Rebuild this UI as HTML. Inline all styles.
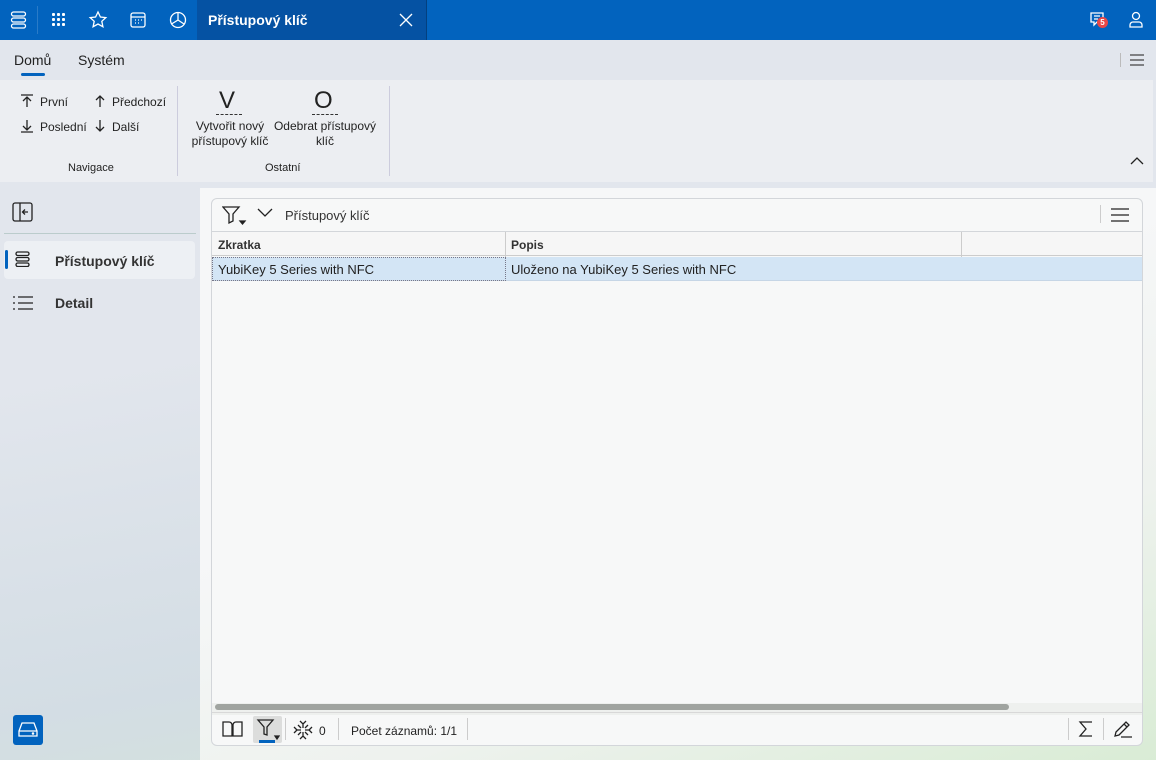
<!DOCTYPE html><html><head><meta charset="utf-8"><style>
*{box-sizing:border-box;margin:0;padding:0}
body{width:1156px;height:760px;overflow:hidden;font-family:"Liberation Sans",sans-serif;font-size:12px;color:#222;background:linear-gradient(170deg,#e2e6ed 40%,#d3dde4 75%,#d4e6d4);position:relative}
.a{position:absolute}
svg{position:absolute;fill:none;stroke-width:1.3}
</style></head><body>
<div class="a" style="left:0;top:0;width:1156px;height:40px;background:#0263be"></div>
<div class="a" style="left:37px;top:6px;width:1px;height:28px;background:#2a7bc8"></div>
<div class="a" style="left:197px;top:0;width:230px;height:40px;background:#0552a3;border-right:1px solid #03407f"></div>
<div class="a" style="left:208px;top:12px;color:#fff;font-weight:bold;font-size:14px">Přístupový klíč</div>
<svg style="left:398px;top:12px" width="16" height="16" stroke="#fff"><path d="M2 2L14 14M14 2L2 14"/></svg>
<svg style="left:10px;top:11px" width="18" height="18" stroke="#fff" stroke-width="1.5"><rect x="1.5" y="1" width="14" height="4" rx="2"/><rect x="1.5" y="7" width="14" height="4" rx="2"/><rect x="1.5" y="13" width="14" height="4" rx="2"/></svg>
<svg style="left:51px;top:12px;fill:#fff" width="16" height="16" stroke="none"><g><rect x="1" y="1" width="3" height="3" rx="1"/><rect x="6" y="1" width="3" height="3" rx="1"/><rect x="11" y="1" width="3" height="3" rx="1"/><rect x="1" y="6" width="3" height="3" rx="1"/><rect x="6" y="6" width="3" height="3" rx="1"/><rect x="11" y="6" width="3" height="3" rx="1"/><rect x="1" y="11" width="3" height="3" rx="1"/><rect x="6" y="11" width="3" height="3" rx="1"/><rect x="11" y="11" width="3" height="3" rx="1"/></g></svg>
<svg style="left:88px;top:10px" width="20" height="20" stroke="#fff"><path d="M10 2l2.4 5 5.4.6-4 3.7 1.1 5.4L10 14l-4.9 2.7 1.1-5.4-4-3.7 5.4-.6z"/></svg>
<svg style="left:129px;top:11px" width="18" height="18" stroke="#fff"><rect x="2" y="2" width="14" height="14" rx="2"/><path d="M2 6h14M6 9h1M9 9h1M12 9h1M6 12h1M9 12h1"/></svg>
<svg style="left:168px;top:10px" width="20" height="20" stroke="#fff"><circle cx="10" cy="10" r="7.5"/><path d="M10 2.5V10l-6.5 4M10 10l6 4"/></svg>
<svg style="left:1088px;top:10px" width="20" height="20" stroke="#fff"><path d="M3 3h12v9H9l-3 3v-3H3z"/><path d="M6 6h6M6 9h4"/></svg>
<div class="a" style="left:1097px;top:17px;width:11px;height:11px;border-radius:50%;background:#e84848;color:#fff;font-size:8px;font-weight:bold;text-align:center;line-height:11px">5</div>
<svg style="left:1127px;top:10px" width="18" height="20" stroke="#fff"><circle cx="9" cy="6" r="3.5"/><path d="M3 17v-2a3 3 0 013-3h6a3 3 0 013 3v2z"/></svg>
<div class="a" style="left:14px;top:52px;font-size:14px">Domů</div>
<div class="a" style="left:21px;top:73px;width:24px;height:3px;background:#0263be;border-radius:2px"></div>
<div class="a" style="left:78px;top:52px;font-size:14px">Systém</div>
<div class="a" style="left:1120px;top:53px;width:1px;height:14px;background:#bbb"></div>
<svg style="left:1129px;top:53px" width="16" height="14" stroke="#444"><path d="M1 2h14M1 7h14M1 12h14"/></svg>
<div class="a" style="left:0;top:80px;width:1153px;height:102px;background:#eceef2"></div>
<div class="a" style="left:177px;top:86px;width:1px;height:90px;background:#ccd"></div>
<div class="a" style="left:389px;top:86px;width:1px;height:90px;background:#ccd"></div>
<svg style="left:20px;top:94px" width="14" height="14" stroke="#222"><path d="M1 1h12M7 3v10M3 7l4-4 4 4"/></svg>
<div class="a" style="left:40px;top:95px">První</div>
<svg style="left:20px;top:119px" width="14" height="14" stroke="#222"><path d="M1 13h12M7 1v10M3 7l4 4 4-4"/></svg>
<div class="a" style="left:40px;top:120px">Poslední</div>
<svg style="left:93px;top:94px" width="14" height="14" stroke="#222"><path d="M7 2v11M3 6l4-4 4 4"/></svg>
<div class="a" style="left:112px;top:95px">Předchozí</div>
<svg style="left:93px;top:119px" width="14" height="14" stroke="#222"><path d="M7 1v11M3 8l4 4 4-4"/></svg>
<div class="a" style="left:112px;top:120px">Další</div>
<div class="a" style="left:68px;top:162px;font-size:11px">Navigace</div>
<div class="a" style="left:265px;top:162px;font-size:11px">Ostatní</div>
<div class="a" style="left:219px;top:88px;font-size:24px;line-height:26px">V</div>
<div class="a" style="left:216px;top:114px;width:26px;border-top:1px dashed #333"></div>
<div class="a" style="left:314px;top:88px;font-size:24px;line-height:26px">O</div>
<div class="a" style="left:312px;top:114px;width:26px;border-top:1px dashed #333"></div>
<div class="a" style="left:188px;top:119px;width:84px;text-align:center;line-height:15px">Vytvořit nový přístupový klíč</div>
<div class="a" style="left:272px;top:119px;width:106px;text-align:center;line-height:15px">Odebrat přístupový klíč</div>
<svg style="left:1130px;top:156px" width="14" height="10" stroke="#222"><path d="M1 8l6-6 6 6"/></svg>
<svg style="left:12px;top:202px" width="22" height="20" stroke="#222"><rect x="1" y="1" width="19" height="18" rx="2"/><path d="M8 1v18M16 10h-5M13 7.5l-2.5 2.5 2.5 2.5"/></svg>
<div class="a" style="left:4px;top:233px;width:192px;height:1px;background:#bcc"></div>
<div class="a" style="left:4px;top:241px;width:191px;height:38px;background:#edf0f4;border-radius:4px"></div>
<div class="a" style="left:5px;top:250px;width:3px;height:19px;background:#0263be;border-radius:2px"></div>
<svg style="left:15px;top:251px" width="16" height="16" stroke="#222" stroke-width="1.5"><rect x="1" y="1" width="13" height="3.5" rx="1.7"/><rect x="1" y="6.5" width="13" height="3.5" rx="1.7"/><rect x="1" y="12" width="13" height="3.5" rx="1.7"/></svg>
<div class="a" style="left:55px;top:253px;font-size:14px;font-weight:bold;color:#333">Přístupový klíč</div>
<svg style="left:12px;top:295px" width="22" height="16" stroke="#222"><path d="M1 2h2M6 2h15M1 8h2M6 8h15M1 14h2M6 14h15"/></svg>
<div class="a" style="left:55px;top:295px;font-size:14px;font-weight:bold;color:#333">Detail</div>
<div class="a" style="left:13px;top:715px;width:30px;height:30px;background:#0263be;border-radius:3px"></div>
<svg style="left:17px;top:720px" width="22" height="20" stroke="#fff"><path d="M2 11l3-8h12l3 8v5H2zM2 11h18"/><circle cx="16" cy="13.5" r=".6" fill="#fff"/></svg>
<div class="a" style="left:200px;top:188px;width:956px;height:572px;background:linear-gradient(160deg,#f6f7f8 40%,#eef2ee 70%,#d9ecd5)"></div>
<div class="a" style="left:211px;top:198px;width:932px;height:548px;border:1px solid #d3d6da;border-radius:6px;background:#f7f8f8;overflow:hidden">
<div class="a" style="left:0;top:32px;width:932px;height:1px;background:#d3d6da"></div>
<div class="a" style="left:0;top:33px;width:932px;height:24px;background:#f6f6f6;border-bottom:1px solid #ccc"></div>
<div class="a" style="left:293px;top:33px;width:1px;height:49px;background:#ccc"></div>
<div class="a" style="left:749px;top:33px;width:1px;height:49px;background:#ccc"></div>
<div class="a" style="left:6px;top:39px;font-weight:bold;font-size:12px;color:#333">Zkratka</div>
<div class="a" style="left:299px;top:39px;font-weight:bold;font-size:12px;color:#333">Popis</div>
<div class="a" style="left:0;top:58px;width:932px;height:24px;background:#d3e5f5;border-bottom:1px solid #c6d6e6"></div>
<div class="a" style="left:0;top:58px;width:294px;height:24px;border:1px dotted #778"></div>
<div class="a" style="left:6px;top:63px;font-size:13px">YubiKey 5 Series with NFC</div>
<div class="a" style="left:299px;top:63px;font-size:13px">Uloženo na YubiKey 5 Series with NFC</div>
<div class="a" style="left:73px;top:9px;font-size:13px;color:#333">Přístupový klíč</div>
<div class="a" style="left:888px;top:6px;width:1px;height:18px;background:#ccc"></div>
<svg style="left:898px;top:8px" width="20" height="16" stroke="#222"><path d="M1 2h18M1 8h18M1 14h18"/></svg>
<svg style="left:10px;top:7px" width="26" height="20" stroke="#222"><path d="M1 1h16l-6 7v7l-4 2V8z"/><path d="M18 15h5l-2.5 3z" fill="#222"/></svg>
<svg style="left:45px;top:9px" width="16" height="10" stroke="#222"><path d="M1 1l7 7 7-7"/></svg>
<div class="a" style="left:0;top:504px;width:932px;height:12px;background:#eef0ee"></div>
<div class="a" style="left:3px;top:505px;width:794px;height:6px;background:#a0a4a0;border-radius:3px"></div>
<div class="a" style="left:0;top:513px;width:932px;height:1px;background:#d8d8d8"></div>
<svg style="left:10px;top:521px" width="22" height="18" stroke="#222" stroke-width="1.5"><path d="M1 2h6a3 3 0 013 3v11H1zM20 2h-6a3 3 0 00-3 3v11h9z"/></svg>
<div class="a" style="left:41px;top:517px;width:29px;height:27px;background:#dcdddc;border-radius:2px"></div>
<svg style="left:44px;top:520px" width="24" height="22" stroke="#222"><path d="M2 1h15l-6 7v8l-3-1V8z"/><path d="M19 17h4l-2 3z" fill="#222"/></svg>
<div class="a" style="left:47px;top:541px;width:16px;height:3px;background:#0263be"></div>
<div class="a" style="left:73px;top:519px;width:1px;height:22px;background:#ccc"></div>
<svg style="left:81px;top:521px" width="20" height="20" stroke="#222" stroke-width="1.4"><path d="M7 1l3 3 3-3M7 19l3-3 3 3M1 7l3 3-3 3M19 7l-3 3 3 3M10 4v4M10 12v4M4 10h4M12 10h4M5 5l3 3M15 5l-3 3M5 15l3-3M15 15l-3-3"/></svg>
<div class="a" style="left:107px;top:525px;font-size:12px">0</div>
<div class="a" style="left:126px;top:519px;width:1px;height:22px;background:#ccc"></div>
<div class="a" style="left:139px;top:525px;font-size:12px">Počet záznamů: 1/1</div>
<div class="a" style="left:255px;top:519px;width:1px;height:22px;background:#ccc"></div>
<div class="a" style="left:856px;top:519px;width:1px;height:22px;background:#ccc"></div>
<svg style="left:865px;top:521px" width="18" height="18" stroke="#222" stroke-width="1.4"><path d="M15 2H3l6 7-6 7h12"/></svg>
<div class="a" style="left:891px;top:519px;width:1px;height:22px;background:#ccc"></div>
<svg style="left:900px;top:520px" width="22" height="20" stroke="#222" stroke-width="1.3"><path d="M3 17l1-4 10-10 3 3-10 10zM12 5l3 3M9 18h11"/></svg>
</div>
</body></html>
